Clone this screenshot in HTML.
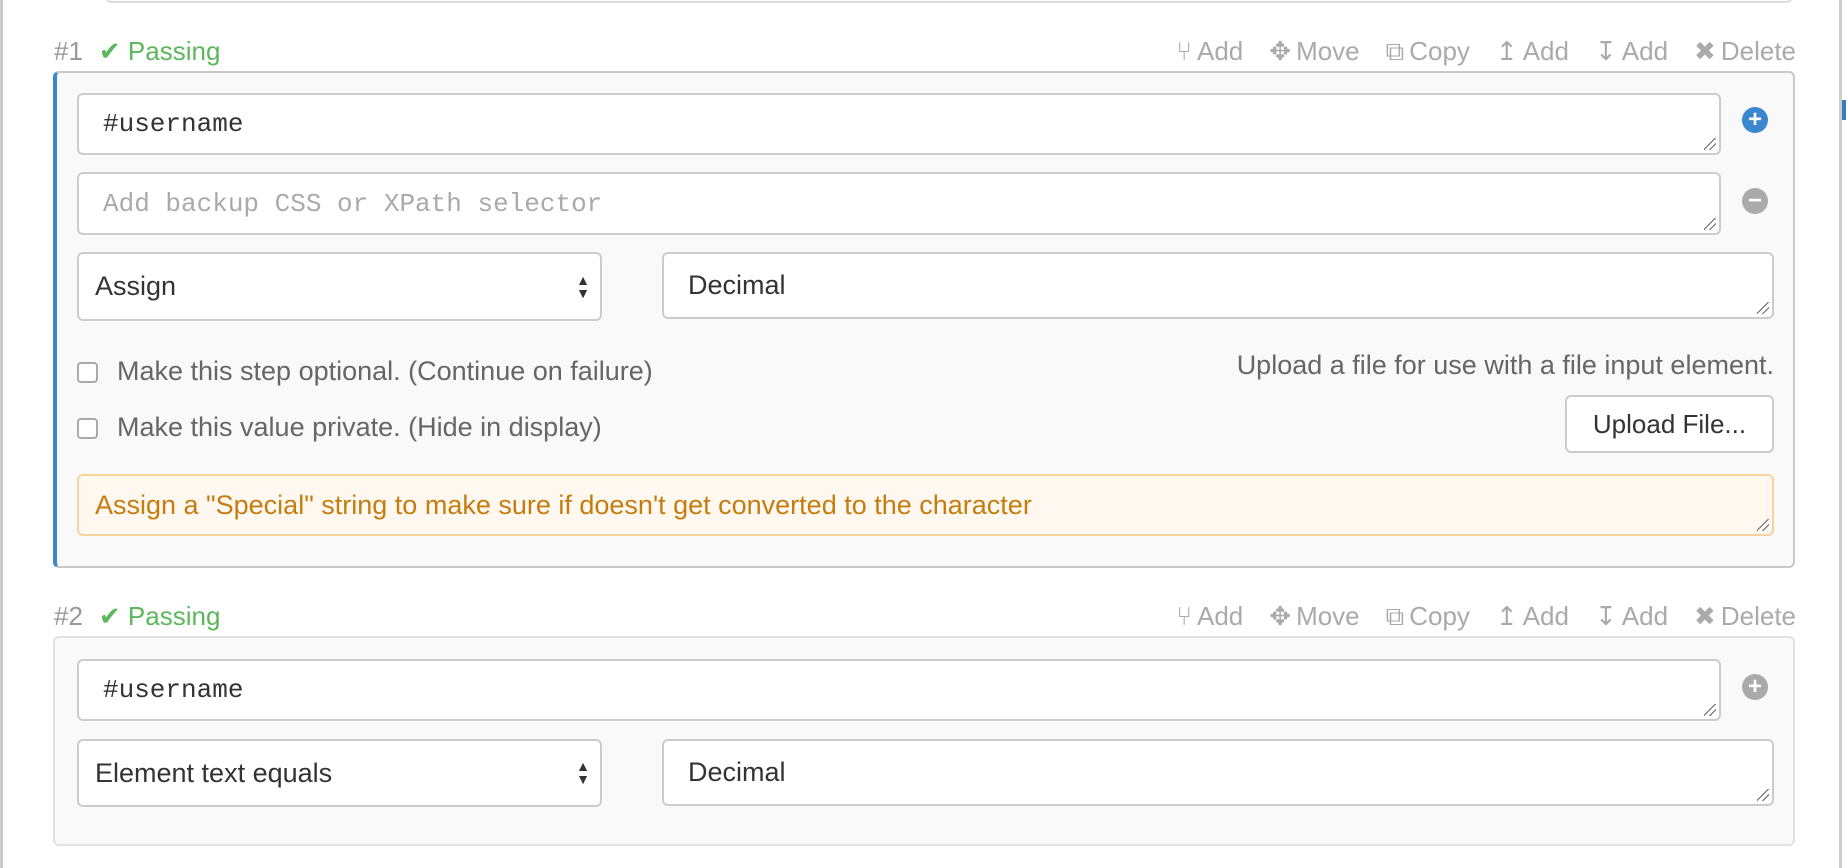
<!DOCTYPE html>
<html><head><meta charset="utf-8"><style>
*{box-sizing:border-box;margin:0;padding:0}
body{width:1848px;height:868px;background:#fff;position:relative;overflow:hidden;font-family:"Liberation Sans",sans-serif;font-size:27px;color:#555}
.a{position:absolute}
.hdr{position:absolute;left:54px;height:30px;line-height:30px;font-size:26px;color:#999}
.hdr .ok{color:#5cb85c;margin-left:16px}
.tb{position:absolute;right:52px;height:30px;line-height:30px;color:#aaa;font-size:26px;display:flex;gap:26px}
.tb span i{font-style:normal;margin-right:5px}
.card{position:absolute;left:53px;width:1742px;background:#f9f9f9;border:2px solid #c8c8c8;border-radius:6px}
.inp{position:absolute;background:#fff;border:2px solid #ccc;border-radius:6px;line-height:normal}
.mono{font-family:"Liberation Mono",monospace;font-size:26px;color:#333;padding-left:24px;display:flex;align-items:center}
.ph{color:#aaa}
.sel{font-size:27px;color:#333;padding-left:16px;display:flex;align-items:center}
.arr{position:absolute;right:10px;top:50%;transform:translateY(-50%);font-size:14px;line-height:13px;color:#333}
.grip{position:absolute;right:3px;bottom:3px;width:12px;height:12px;background:linear-gradient(135deg,transparent 45%,#666 45%,#666 52%,transparent 52%,transparent 70%,#666 70%,#666 77%,transparent 77%)}
.cb{position:absolute;width:21px;height:21px;border:2px solid #aaa;border-radius:4px;background:#fff}
.lbl{position:absolute;font-size:27px;color:#666}
.circ{position:absolute;width:26px;height:26px;border-radius:50%;color:#fff;font-weight:bold;text-align:center;line-height:26px;font-size:24px}
</style></head><body>
<div class="a" style="left:0;top:0;width:3px;height:868px;background:#ccc"></div>
<div class="a" style="left:1839px;top:0;width:3px;height:868px;background:#ccc"></div>
<div class="a" style="left:1842px;top:100px;width:4px;height:20px;background:#3a7ab8"></div>
<div class="a" style="left:106px;top:-6px;width:1686px;height:9px;border:2px solid #ddd;border-radius:6px;background:#f9f9f9"></div>

<div class="hdr" style="top:36px">#1<span class="ok">✔ Passing</span></div>
<div class="tb" style="top:36px"><span><i>⑂</i>Add</span><span><i>✥</i>Move</span><span><i>⧉</i>Copy</span><span><i>↥</i>Add</span><span><i>↧</i>Add</span><span><i>✖</i>Delete</span></div>

<div class="card" style="top:71px;height:497px;border-left:4px solid #3a87cf">
</div>
<div class="inp mono" style="left:77px;top:93px;width:1644px;height:62px">#username<div class="grip"></div></div>
<div class="circ" style="left:1742px;top:107px;background:#3a87cf">+</div>
<div class="inp mono ph" style="left:77px;top:172px;width:1644px;height:63px"><span class="ph">Add backup CSS or XPath selector</span><div class="grip"></div></div>
<div class="circ" style="left:1742px;top:188px;background:#aaa">−</div>
<div class="inp sel" style="left:77px;top:252px;width:525px;height:69px">Assign<span class="arr">▲<br>▼</span></div>
<div class="inp sel" style="left:662px;top:252px;width:1112px;height:67px;padding-left:24px">Decimal<div class="grip"></div></div>
<div class="cb" style="left:77px;top:362px"></div>
<div class="lbl" style="left:117px;top:356px">Make this step optional. (Continue on failure)</div>
<div class="cb" style="left:77px;top:418px"></div>
<div class="lbl" style="left:117px;top:412px">Make this value private. (Hide in display)</div>
<div class="lbl" style="right:74px;top:350px">Upload a file for use with a file input element.</div>
<div class="inp" style="left:1565px;top:395px;width:209px;height:58px;color:#333;display:flex;align-items:center;justify-content:center;font-size:26px">Upload File...</div>
<div class="inp" style="left:77px;top:474px;width:1697px;height:62px;background:#fff8f1;border-color:#f5d39f;color:#c47d0e;padding-left:16px;display:flex;align-items:center">Assign a "Special" string to make sure if doesn't get converted to the character<div class="grip"></div></div>

<div class="hdr" style="top:601px">#2<span class="ok">✔ Passing</span></div>
<div class="tb" style="top:601px"><span><i>⑂</i>Add</span><span><i>✥</i>Move</span><span><i>⧉</i>Copy</span><span><i>↥</i>Add</span><span><i>↧</i>Add</span><span><i>✖</i>Delete</span></div>
<div class="card" style="top:636px;height:210px;border-color:#e2e2e2"></div>
<div class="inp mono" style="left:77px;top:659px;width:1644px;height:62px">#username<div class="grip"></div></div>
<div class="circ" style="left:1742px;top:674px;background:#aaa">+</div>
<div class="inp sel" style="left:77px;top:739px;width:525px;height:68px">Element text equals<span class="arr">▲<br>▼</span></div>
<div class="inp sel" style="left:662px;top:739px;width:1112px;height:67px;padding-left:24px">Decimal<div class="grip"></div></div>
</body></html>
